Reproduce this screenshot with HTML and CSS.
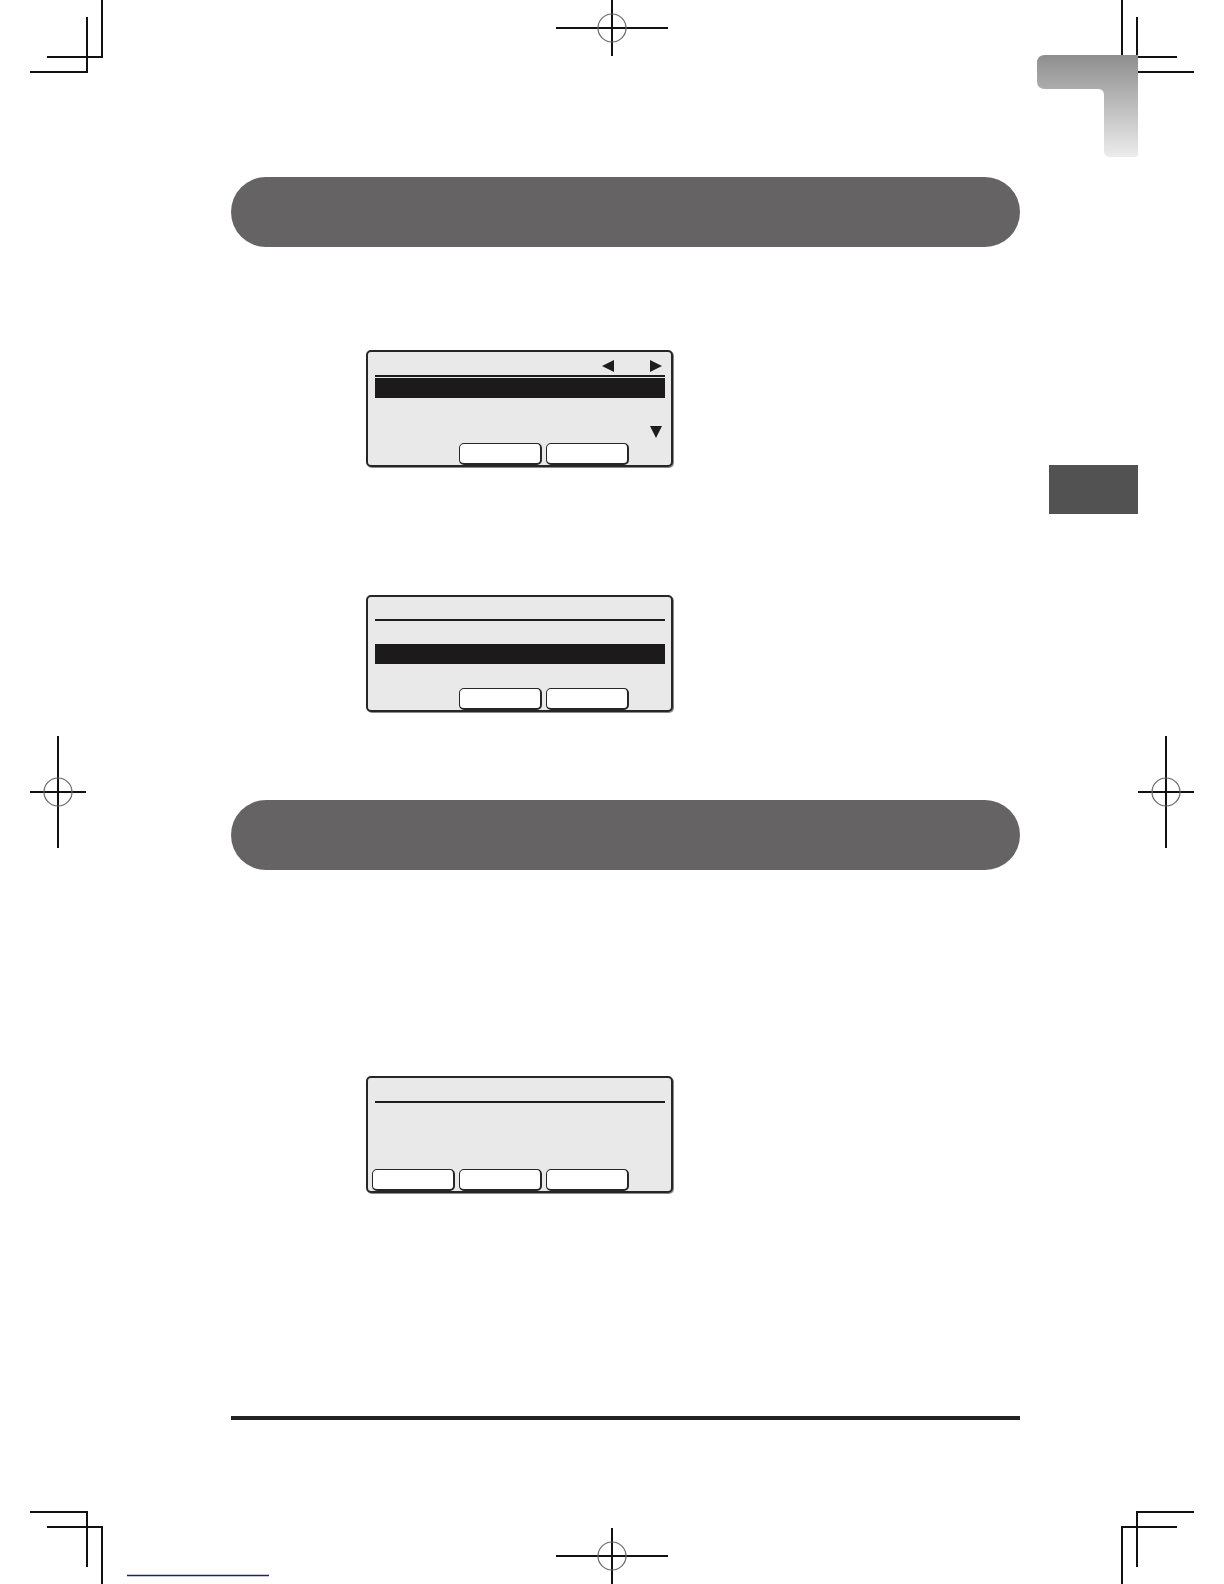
FILE: index.html
```html
<!DOCTYPE html>
<html lang="en">
<head>
<meta charset="utf-8">
<title>Manual page</title>
<link rel="stylesheet" href="styles.css">
</head>
<body>
<div class="page">
  <svg class="marks" width="1224" height="1584" viewBox="0 0 1224 1584" xmlns="http://www.w3.org/2000/svg">
    <g stroke="#111" stroke-width="2" fill="none">
      <!-- top-left crop -->
      <path d="M102 0 V57 H47"/>
      <path d="M87 17 V72 H30"/>
      <!-- top-right crop -->
      <path d="M1122 0 V57 H1177"/>
      <path d="M1137 17 V72 H1194"/>
      <!-- bottom-left crop -->
      <path d="M102 1584 V1527 H47"/>
      <path d="M87 1567 V1512 H30"/>
      <!-- bottom-right crop -->
      <path d="M1122 1584 V1527 H1177"/>
      <path d="M1137 1567 V1512 H1194"/>
      <!-- registration marks -->
      <path d="M612 0 V56 M556 28 H668"/>
      <path d="M612 1528 V1584 M556 1556 H668"/>
      <path d="M58 736 V848 M30 792 H86"/>
      <path d="M1166 736 V848 M1138 792 H1194"/>
    </g>
    <g stroke="#666" stroke-width="1.2" fill="none">
      <circle cx="612" cy="28" r="14"/>
      <circle cx="612" cy="1556" r="14"/>
      <circle cx="58" cy="792" r="14"/>
      <circle cx="1166" cy="792" r="14"/>
    </g>
    <line x1="127" y1="1575.5" x2="269" y2="1575.5" stroke="#1c1f7c" stroke-width="1.3"/>
  </svg>

  <svg class="corner-tab" width="101" height="102" viewBox="0 0 101 102" xmlns="http://www.w3.org/2000/svg">
    <defs>
      <linearGradient id="tabgrad" x1="0" y1="0" x2="0" y2="1">
        <stop offset="0" stop-color="#8e8e8e"/>
        <stop offset="1" stop-color="#ececec"/>
      </linearGradient>
    </defs>
    <path d="M8 0 H101 V99 Q101 102 98 102 H73 Q67 102 67 96 V40 Q67 34 61 34 H8 Q0 34 0 26 V8 Q0 0 8 0 Z" fill="url(#tabgrad)"/>
  </svg>

  <div class="side-tab"></div>

  <main class="column">
    <div class="banner"></div>

    <div class="screen screen-a">
      <div class="hdr">
        <span class="tri tri-left"></span>
        <span class="tri tri-right"></span>
      </div>
      <div class="hline"></div>
      <div class="bar bar-a"></div>
      <span class="tri tri-down"></span>
      <div class="btns btns-a">
        <span class="btn btn-empty"></span>
        <span class="btn"></span>
        <span class="btn"></span>
      </div>
    </div>

    <div class="screen screen-b">
      <div class="hline hline-b"></div>
      <div class="bar bar-b"></div>
      <div class="btns btns-b">
        <span class="btn btn-empty"></span>
        <span class="btn"></span>
        <span class="btn"></span>
      </div>
    </div>

    <div class="banner banner-2"></div>

    <div class="screen screen-c">
      <div class="hline hline-c"></div>
      <div class="btns btns-c">
        <span class="btn"></span>
        <span class="btn"></span>
        <span class="btn"></span>
      </div>
    </div>

    <div class="footer-rule"></div>
  </main>
</div>
</body>
</html>
```

FILE: styles.css
```css
html, body {
  margin: 0;
  padding: 0;
  background: #ffffff;
  font-family: "Liberation Sans", Arial, sans-serif;
}

.page {
  position: relative;
  width: 1224px;
  height: 1584px;
  overflow: hidden;
  background: #ffffff;
}

.marks {
  position: absolute;
  left: 0;
  top: 0;
  pointer-events: none;
}

.corner-tab {
  position: absolute;
  left: 1037px;
  top: 55px;
}

.side-tab {
  position: absolute;
  left: 1049px;
  top: 465px;
  width: 89px;
  height: 49px;
  background: #525252;
}

.column {
  display: flex;
  flex-direction: column;
  margin-left: 231px;
  padding-top: 177px;
  width: 789px;
}

.banner {
  height: 70px;
  border-radius: 35px;
  background: #656364;
}

.banner-2 {
  margin-top: 88px;
}

.screen {
  box-sizing: border-box;
  width: 307px;
  height: 117px;
  margin-left: 135px;
  border: 2px solid #262626;
  border-radius: 5px;
  background: #e9e9e9;
  box-shadow: 1px 1px 0 #8a8a8a;
  padding: 0 6px 0 7px;
  display: flex;
  flex-direction: column;
}

.screen-a { margin-top: 103px; }
.screen-b { margin-top: 128px; }
.screen-c { margin-top: 206px; }

.hdr {
  height: 23px;
  box-sizing: border-box;
  padding-top: 8px;
  padding-right: 3px;
  display: flex;
  justify-content: flex-end;
  align-items: flex-start;
}

.tri {
  display: block;
  width: 0;
  height: 0;
}

.tri-left {
  border-top: 6.5px solid transparent;
  border-bottom: 6.5px solid transparent;
  border-right: 12px solid #1d1d1d;
  margin-right: 36px;
}

.tri-right {
  border-top: 6.5px solid transparent;
  border-bottom: 6.5px solid transparent;
  border-left: 12px solid #1d1d1d;
}

.tri-down {
  align-self: flex-end;
  margin-right: 3px;
  margin-top: 28px;
  border-left: 6.5px solid transparent;
  border-right: 6.5px solid transparent;
  border-top: 12px solid #1d1d1d;
}

.hline {
  height: 1.5px;
  background: #1d1d1d;
}

.hline-b { margin-top: 22px; }
.hline-c { margin-top: 23px; }

.bar {
  height: 20px;
  background: #1c1a1a;
}

.bar-a { margin-top: 1px; }
.bar-b { margin-top: 23px; }

.btns {
  display: flex;
  gap: 4px;
  margin-left: -3px;
  height: 22px;
}

.btns-a { margin-top: 5px; }
.btns-b { margin-top: 24px; }
.btns-c { margin-top: 66px; }

.btn {
  box-sizing: border-box;
  width: 83px;
  height: 22px;
  background: #ffffff;
  border: 1px solid #262626;
  border-right-width: 2px;
  border-bottom-width: 2px;
  border-radius: 5px;
}

.btn-empty {
  visibility: hidden;
}

.footer-rule {
  margin-top: 223px;
  height: 4px;
  background: #222222;
}
```
